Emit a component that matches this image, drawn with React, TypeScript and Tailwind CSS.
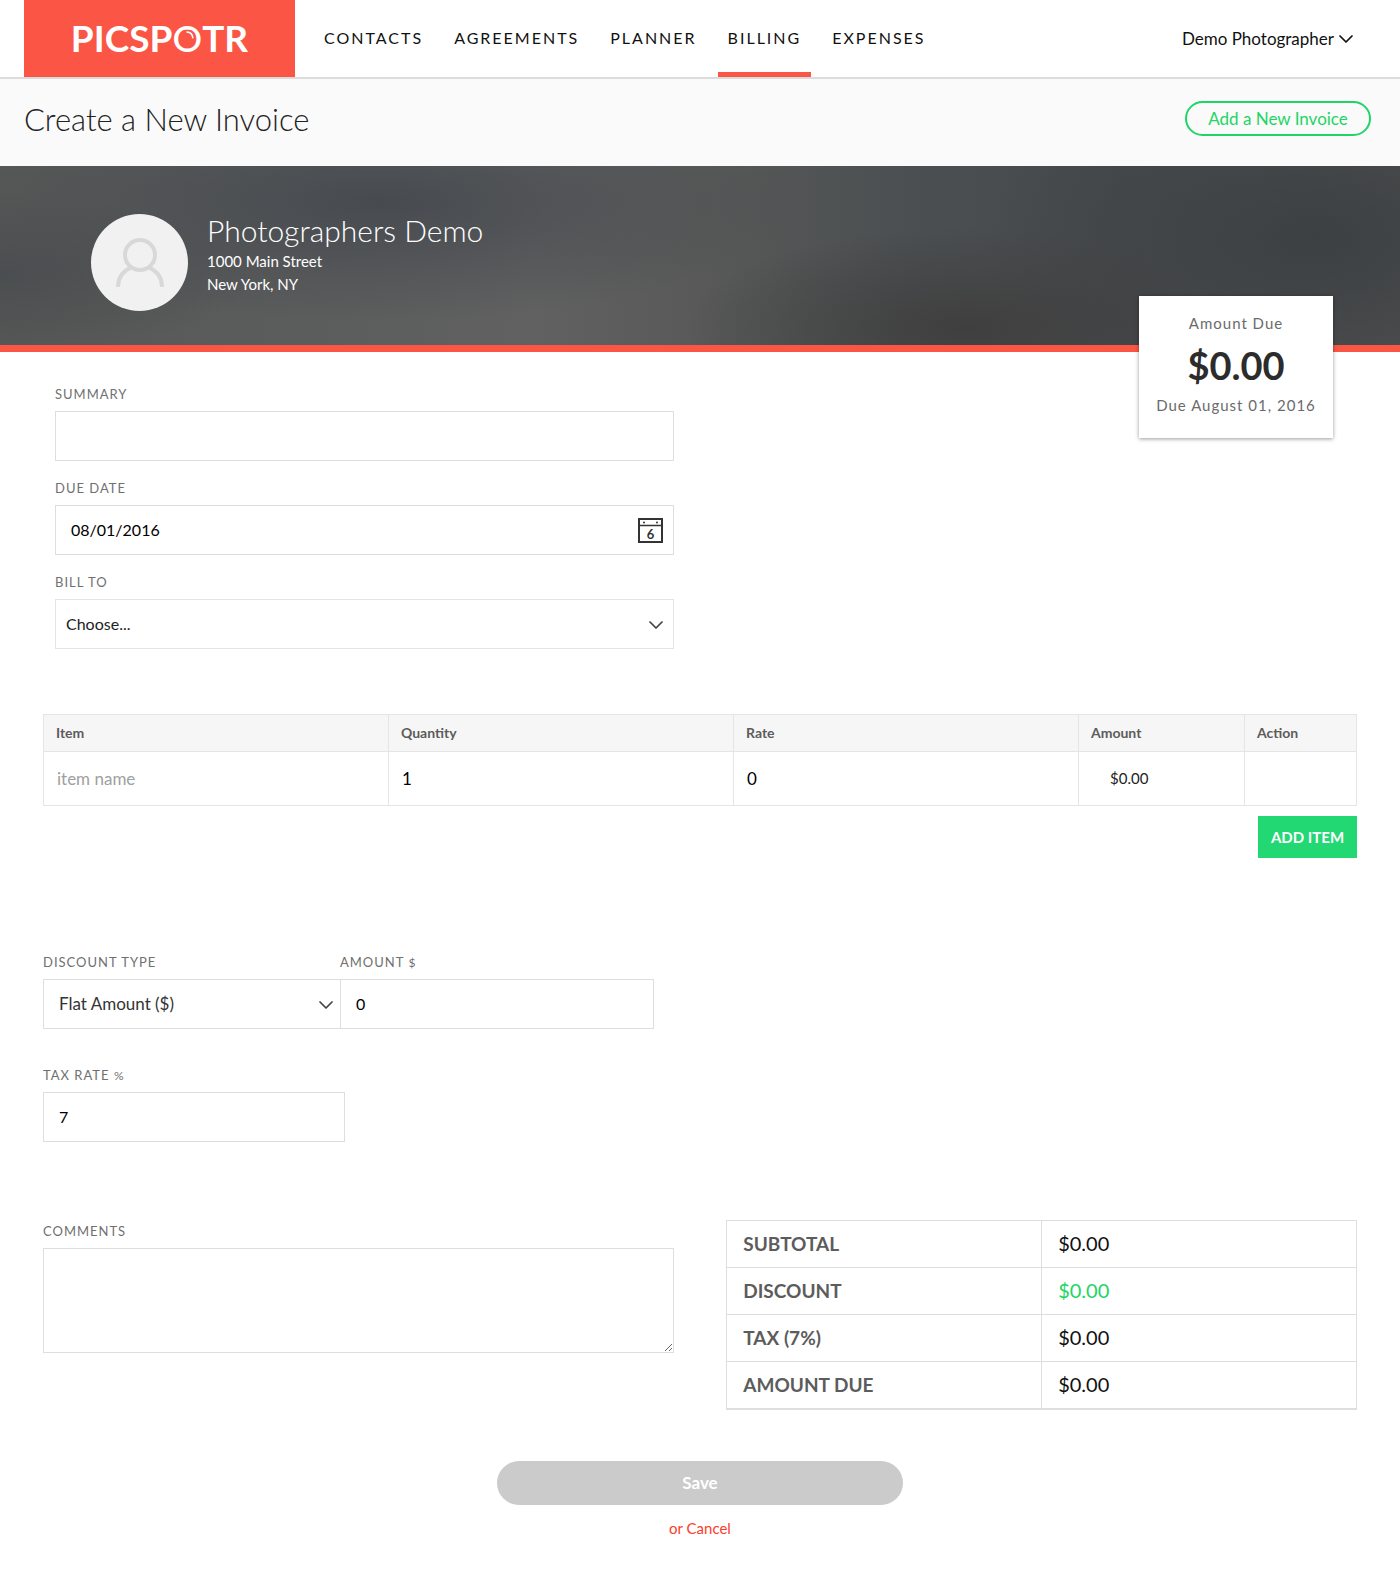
import React from "react";
import { ChevronDown } from "lucide-react";

const NAV = ["Contacts", "Agreements", "Planner", "Billing", "Expenses"];

const TOTALS = [
  { label: "SUBTOTAL", value: "$0.00", color: "text-[#111111]" },
  { label: "DISCOUNT", value: "$0.00", color: "text-[#1ed565]" },
  { label: "TAX (7%)", value: "$0.00", color: "text-[#111111]" },
  { label: "AMOUNT DUE", value: "$0.00", color: "text-[#111111]" },
];

const labelClass = "block h-5 mb-[7px] text-[13px] leading-5 tracking-[1px] uppercase text-[#707070]";
const fieldClass = "block w-full h-[50px] border border-[#dedede] bg-white px-[15px] pb-[2px] text-[16px] text-black rounded-none outline-none";

export default function App() {
  return <div className="min-h-screen bg-white text-[#222222] font-['Lato','Open_Sans',sans-serif]">
      <Header />
      <div className="flex items-center justify-between bg-[#fafafa] h-[87px] pl-6 pr-[29px] pb-2">
        <h1 className="text-[31px] leading-9 font-light text-[#222222]">Create a New Invoice</h1>
        <button className="h-[35px] w-[186px] rounded-full border-2 border-[#1ed565] text-[17px] leading-5 text-[#1ed565]">
          Add a New Invoice
        </button>
      </div>
      <Banner />
      <main className="px-[43px] pt-8 pb-9">
        <div className="w-[48%] pl-3 space-y-[17px]">
          <div>
            <label htmlFor="summary" className={labelClass}>Summary</label>
            <input id="summary" type="text" className={fieldClass} />
          </div>
          <div>
            <label htmlFor="due" className={labelClass}>Due Date</label>
            <div className="relative">
              <input id="due" type="text" defaultValue="08/01/2016" className={fieldClass} />
              <CalendarIcon />
            </div>
          </div>
          <div>
            <label htmlFor="bill-to" className={labelClass}>Bill To</label>
            <div className="relative">
              <select id="bill-to" className="block w-full h-[50px] appearance-none border border-[#e4e4e4] bg-white px-[10px] text-[16px] text-[#222222]">
                <option>Choose...</option>
              </select>
              <ChevronDown className="absolute right-[6px] top-[14px] w-6 h-6 text-[#444444] pointer-events-none" strokeWidth={1.75} />
            </div>
          </div>
        </div>
        <ItemsTable />
        <div className="flex justify-end mt-[10px]">
          <button className="h-[42px] w-[99px] bg-[#22d873] text-[15px] font-bold text-white">ADD ITEM</button>
        </div>
        {/* Discount and tax */}
        <div className="flex w-[48%] pr-5 mt-[94px]">
          <div className="w-[297px] shrink">
            <label htmlFor="discount-type" className={labelClass}>Discount Type</label>
            <div className="relative">
              <select id="discount-type" className="block w-full h-[50px] appearance-none border border-r-0 border-[#dedede] bg-white px-[15px] text-[17px] text-[#333333]">
                <option>Flat Amount ($)</option>
              </select>
              <ChevronDown className="absolute right-[2px] top-[14px] w-6 h-6 text-[#444444] pointer-events-none" strokeWidth={1.75} />
            </div>
          </div>
          <div className="flex-1">
            <label htmlFor="discount-amount" className={labelClass}>Amount <span className="text-[12px]">$</span></label>
            <input id="discount-amount" type="text" defaultValue="0" className={fieldClass} />
          </div>
        </div>
        <div className="w-[23%] mt-9">
          <label htmlFor="tax" className={labelClass}>Tax Rate <span className="text-[12px]">%</span></label>
          <input id="tax" type="text" defaultValue="7" className={fieldClass} />
        </div>
        {/* Comments and totals */}
        <div className="flex justify-between items-start mt-[78px]">
          <div className="w-[48%] pt-px">
            <label htmlFor="comments" className={labelClass}>Comments</label>
            <textarea id="comments" className="block w-full h-[105px] border border-[#dedede] bg-white p-3 text-[17px] outline-none resize" />
          </div>
          <table className="w-[48%] border-collapse table-fixed border border-[#dedede] border-b-2 text-[20px] leading-6">
            <tbody>
              {TOTALS.map(row => <tr key={row.label} className="h-[47px] border-b border-[#dedede]">
                  <th scope="row" className="px-4 text-left text-[19px] font-bold text-[#5c5c5c] border-r border-[#dedede]">{row.label}</th>
                  <td className={`px-4 pb-[2px] ${row.color}`}>{row.value}</td>
                </tr>)}
            </tbody>
          </table>
        </div>
        <div className="flex flex-col items-center mt-[51px]">
          <button className="w-[406px] max-w-full h-11 rounded-full bg-[#cbcbcb] text-[17px] font-bold text-white">Save</button>
          <a href="#cancel" className="mt-[13px] text-[15px] leading-5 text-[#fb3d2c]">or Cancel</a>
        </div>
      </main>
    </div>;
}

const Header = () => {
  return <header className="flex h-[79px] border-b-2 border-[#dcdcdc] bg-white pl-6 pr-[42px]">
      <a href="#home" className="flex items-center justify-center w-[271px] pb-[2px] bg-[#fb5545] text-white text-[37px] leading-10 font-bold">
        <span>
          PICSP<span className="relative font-medium">O
            <svg viewBox="0 0 8 8" className="absolute left-[14px] top-[16px] w-2 h-2" fill="none" stroke="currentColor" strokeWidth="1.6" strokeLinecap="round">
              <path d="M1 1 C4 1.200 6.500 3.500 6.800 6.800" />
            </svg>
          </span>TR
        </span>
      </a>
      <nav className="flex gap-[11px] ml-[19px]">
        {NAV.map(item => <a key={item} href={`#${item.toLowerCase()}`} className={`flex items-center px-[10px] pt-[3px] text-[16px] leading-5 tracking-[2px] uppercase text-[#111111] border-b-5 ${item === "Billing" ? "border-[#fb5545]" : "border-transparent"}`}>
            {item}
          </a>)}
      </nav>
      <button className="flex items-center ml-auto text-[17px] leading-5 text-[#111111]">
        Demo Photographer
        <ChevronDown className="w-6 h-6" strokeWidth={1.75} />
      </button>
    </header>;
};

const Banner = () => {
  return <section className="relative flex h-[186px] border-b-7 border-[#fb5545] pl-[91px] pt-12 bg-[radial-gradient(ellipse_280px_100px_at_69%_90%,#403f3f_0%,transparent_100%),radial-gradient(ellipse_340px_180px_at_94%_40%,#3c4042_0%,transparent_100%),radial-gradient(ellipse_420px_120px_at_27%_20%,#474b50_0%,transparent_100%),radial-gradient(ellipse_260px_80px_at_0%_60%,#4b4e50_0%,transparent_100%),linear-gradient(90deg,#565756_0%,#5c5d5d_25%,#616161_38%,#585958_50%,#4b4f51_65%,#474a4c_80%,#505051_100%)]">
      <div className="flex items-center justify-center w-[97px] h-[97px] rounded-full bg-[#f1f1f1]">
        <svg viewBox="0 0 50 50" className="w-[50px] h-[50px]" fill="none" stroke="#d8d8d8" strokeWidth="4">
          <circle cx="25" cy="17" r="15" />
          <path d="M3 49 C3 40 8 33 16 29.500 M34 29.500 C42 33 47 40 47 49" />
        </svg>
      </div>
      <div className="ml-[19px] text-white">
        <h2 className="mb-1 text-[30px] leading-8 font-light">Photographers Demo</h2>
        <p className="text-[15px] leading-[23px]">1000 Main Street</p>
        <p className="text-[15px] leading-[23px]">New York, NY</p>
      </div>
      <div className="absolute right-[67px] top-[130px] w-[194px] h-[142px] pt-[15px] bg-white shadow-[0_1px_4px_rgba(0,0,0,0.4)] text-center">
        <p className="text-[15px] leading-6 tracking-[1px] text-[#6b6b6b]">Amount Due</p>
        <p className="mt-[10px] text-[38px] leading-10 font-bold text-[#2c2c2c]">$0.00</p>
        <p className="mt-2 text-[15px] leading-6 tracking-[1px] text-[#6b6b6b]">Due August 01, 2016</p>
      </div>
    </section>;
};

const ItemsTable = () => {
  return <table className="w-full mt-[65px] border-collapse table-fixed border border-[#e5e5e5] text-left">
      <colgroup>
        <col />
        <col />
        <col />
        <col className="w-[166px]" />
        <col className="w-[112px]" />
      </colgroup>
      <thead>
        <tr className="h-[37px] bg-[#f6f6f6] text-[14px] leading-5 text-[#5c5c5c]">
          {["Item", "Quantity", "Rate", "Amount", "Action"].map(name => <th key={name} scope="col" className="px-3 font-bold border border-[#e5e5e5]">{name}</th>)}
        </tr>
      </thead>
      <tbody>
        <tr className="h-[54px]">
          <td className="border border-[#e5e5e5]">
            <input type="text" aria-label="Item" placeholder="item name" className="w-full px-[13px] text-[17px] text-black placeholder:text-[#a0a0a0] outline-none" />
          </td>
          <td className="border border-[#e5e5e5]">
            <input type="text" aria-label="Quantity" defaultValue="1" className="w-full px-[13px] text-[17px] text-black outline-none" />
          </td>
          <td className="border border-[#e5e5e5]">
            <input type="text" aria-label="Rate" defaultValue="0" className="w-full px-[13px] text-[17px] text-black outline-none" />
          </td>
          <td className="pl-[31px] border border-[#e5e5e5] text-[15px] text-[#222222]">$0.00</td>
          <td className="border border-[#e5e5e5]" />
        </tr>
      </tbody>
    </table>;
};

const CalendarIcon = () => {
  return <svg viewBox="0 0 25 25" className="absolute right-[11px] top-[13px] w-[25px] h-[25px] pointer-events-none" aria-hidden="true">
      <rect x="1" y="1" width="23" height="23" fill="#ffffff" stroke="#333333" strokeWidth="2" />
      <path d="M1 7.500 H24" stroke="#333333" strokeWidth="1.500" />
      <circle cx="6" cy="4.500" r="1" fill="#333333" />
      <circle cx="19" cy="4.500" r="1" fill="#333333" />
      <text x="12.500" y="20.500" textAnchor="middle" fontSize="13" fontWeight="700" fill="#333333">6</text>
    </svg>;
};
